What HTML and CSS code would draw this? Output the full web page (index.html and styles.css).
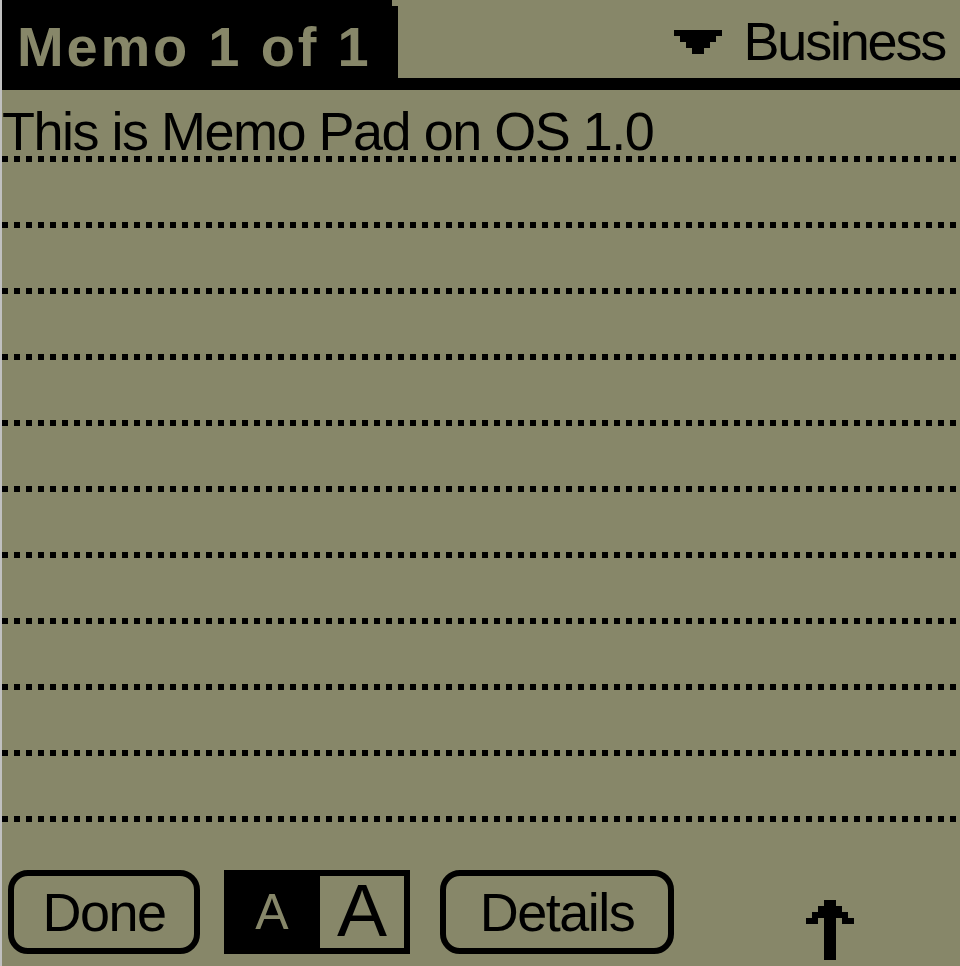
FILE: index.html
```html
<!DOCTYPE html>
<html lang="en">
<head>
    <meta charset="UTF-8">
    <title>Memo Pad</title>
    <link rel="stylesheet" href="styles.css">
</head>
<body>

    <div class="screen">
        <!-- title bar -->
        <div class="titlebar">
            <div class="title">Memo 1 of 1</div>
            <div class="category">
                <svg class="pick" viewBox="0 0 8 4" shape-rendering="crispEdges">
                    <path d="M0 0H8V1H7V2H6V3H5V4H3V3H2V2H1V1H0Z" fill="#000"/>
                </svg>
                <span>Business</span>
            </div>
        </div>

        <!-- memo text with ruled lines -->
        <div class="memo">
            <div class="line">This is Memo Pad on OS 1.0</div>
            <div class="line"></div>
            <div class="line"></div>
            <div class="line"></div>
            <div class="line"></div>
            <div class="line"></div>
            <div class="line"></div>
            <div class="line"></div>
            <div class="line"></div>
            <div class="line"></div>
            <div class="line"></div>
        </div>

        <!-- buttons -->
        <div class="buttons">
            <button class="btn done">Done</button>
            <div class="fontsel">
                <span class="small">A</span>
                <span class="large">A</span>
            </div>
            <button class="btn details">Details</button>
            <svg class="scroll" viewBox="0 0 8 10" shape-rendering="crispEdges">
                <path d="M3 0H5V1H6V2H7V3H8V4H6V3H5V10H3V3H2V4H0V3H1V2H2V1H3Z" fill="#000"/>
            </svg>
        </div>
    </div>

</body>
</html>
```

FILE: styles.css
```css
body {
    margin: 0;
    background-color: #c0c0c0;
    font-family: "Liberation Sans", Arial, sans-serif;
}
.screen {
    margin-left: 2px;
    width: 958px;
    height: 966px;
    background-color: #878769;
    color: #000;
    overflow: hidden;
}
.titlebar {
    display: flex;
    justify-content: space-between;
    height: 78px;
    border-bottom: 12px solid #000;
}
.title {
    width: 396px;
    height: 78px;
    box-sizing: border-box;
    padding: 17px 0 0 15px;
    background-color: #000;
    color: #878769;
    font-weight: bold;
    font-size: 56px;
    letter-spacing: 2.8px;
    line-height: 60px;
    white-space: nowrap;
    clip-path: polygon(0 0, 390px 0, 390px 6px, 100% 6px, 100% 100%, 0 100%);
}
.category {
    display: flex;
    align-items: flex-start;
    padding: 11px 15px 0 0;
    font-size: 54px;
    letter-spacing: -2.2px;
    line-height: 60px;
}
.pick {
    width: 48px;
    height: 24px;
    margin: 19px 21px 0 0;
}
.memo {
    margin-top: 6px;
}
.line {
    height: 66px;
    box-sizing: border-box;
    padding-top: 5px;
    font-size: 54px;
    letter-spacing: -1.5px;
    line-height: 60px;
    white-space: nowrap;
    background: repeating-linear-gradient(90deg, #000 0 6px, transparent 6px 12px) left bottom / 100% 6px no-repeat;
}
.buttons {
    display: flex;
    align-items: flex-start;
    margin-top: 48px;
    padding-left: 6px;
}
.btn {
    height: 84px;
    box-sizing: border-box;
    padding: 0;
    border: 6px solid #000;
    border-radius: 20px;
    background: transparent;
    color: #000;
    font-family: "Liberation Sans", Arial, sans-serif;
    font-size: 54px;
    letter-spacing: -1.5px;
    line-height: 72px;
}
.done {
    width: 192px;
}
.details {
    width: 234px;
    margin-left: 30px;
}
.fontsel {
    display: flex;
    height: 84px;
    margin-left: 24px;
}
.fontsel .small {
    width: 96px;
    background-color: #000;
    color: #878769;
    font-size: 50px;
    line-height: 84px;
    text-align: center;
}
.fontsel .large {
    width: 90px;
    box-sizing: border-box;
    border: 6px solid #000;
    border-left: none;
    font-size: 75px;
    line-height: 68px;
    text-align: center;
}
.scroll {
    width: 48px;
    height: 60px;
    margin: 30px 0 0 132px;
}
```
